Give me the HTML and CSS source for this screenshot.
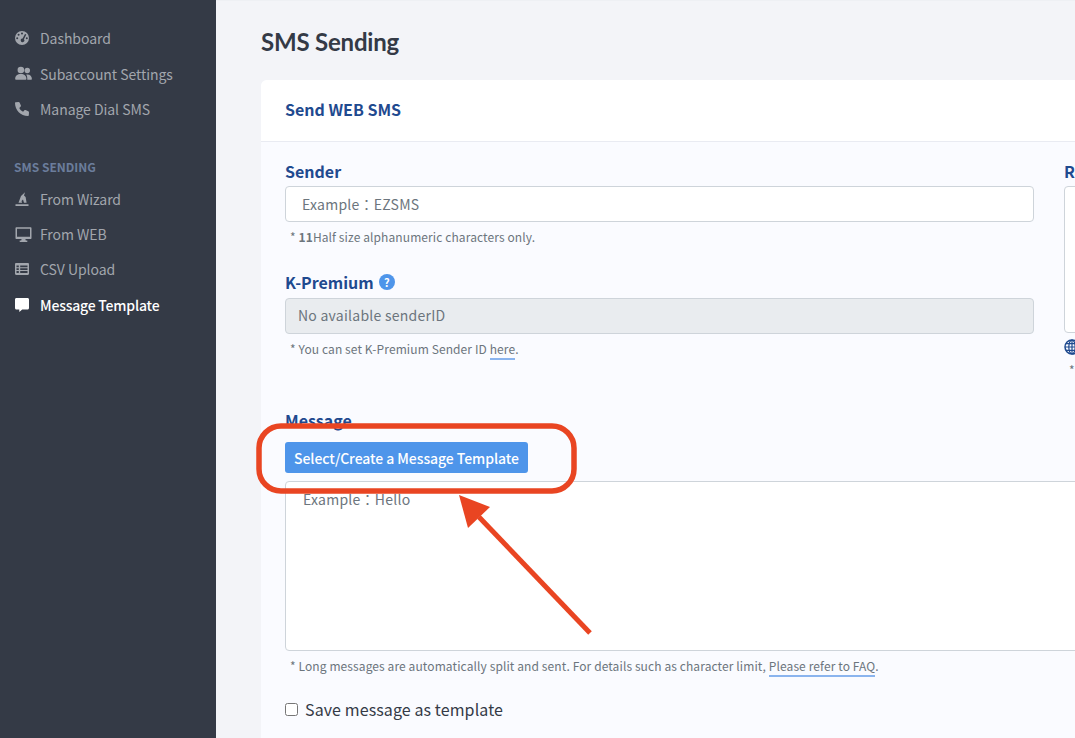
FILE: index.html
```html
<!DOCTYPE html>
<html lang="en">
<head>
<meta charset="utf-8">
<title>SMS Sending</title>
<link rel="stylesheet" href="styles.css">
</head>
<body>
<div class="app">
  <aside class="sidebar">
    <nav class="nav-group">
      <a class="nav-item"><svg class="nav-icon" viewBox="1 1 14 14"><path fill-rule="evenodd" d="M8 1a7 7 0 1 1 0 14A7 7 0 0 1 8 1ZM8 2.400a1 1 0 1 0 0 2 1 1 0 0 0 0-2ZM4.600 3.800a1 1 0 1 0 0 2 1 1 0 0 0 0-2ZM3.200 7.200a1 1 0 1 0 0 2 1 1 0 0 0 0-2ZM11 3.900 8.600 8.500a1.800 1.800 0 1 0 1.300.7l2.400-4.600ZM12.800 7.200a1 1 0 1 0 0 2 1 1 0 0 0 0-2Z"/></svg><span>Dashboard</span></a>
      <a class="nav-item"><svg class="nav-icon nav-icon-wide" viewBox="0 0 18 15"><circle cx="6.200" cy="3.800" r="3.500"/><circle cx="13" cy="4.300" r="2.900"/><path d="M0.200 13.200c0-3.400 2.400-5.200 6-5.200s5.900 1.800 5.900 5.200c0 .5-.3.800-.8.800H1c-.5 0-.8-.3-.8-.8Z"/><path d="M13 14h4.200c.4 0 .7-.3.7-.7 0-2.900-1.800-4.800-4.800-4.800-.7 0-1 .1-1.300.2 1 1 1.300 3 1.200 5.300Z"/></svg><span>Subaccount Settings</span></a>
      <a class="nav-item"><svg class="nav-icon" viewBox="1 1 14 14"><path d="M1.800 1.200 4.600 1c.5 0 .9.200 1.100.7l1.200 2.800c.2.400.1.800-.2 1.100L5.300 6.900c.8 1.700 2.100 3 3.800 3.800l1.300-1.400c.3-.3.700-.4 1.100-.2l2.800 1.200c.5.200.7.600.7 1.100l-.2 2.800c0 .5-.5.800-.9.800C6.700 15 1 9.300 1 2.100c0-.4.300-.9.800-.9Z"/></svg><span>Manage Dial SMS</span></a>
    </nav>
    <h2 class="nav-heading">SMS SENDING</h2>
    <nav class="nav-group">
      <a class="nav-item"><svg class="nav-icon" viewBox="1 1 14 14"><path fill-rule="evenodd" d="M4.500 11.800 7 5 11 1.200 10 4.500l1.600 1.500 1 5.800H10L9 8.500 7.500 10l.6 1.800ZM1.500 13.200h13V15h-13Z"/></svg><span>From Wizard</span></a>
      <a class="nav-item"><svg class="nav-icon nav-icon-wide" viewBox="0 0 16 15"><path fill-rule="evenodd" d="M1 0.300h14c.6 0 1 .4 1 1v9.700c0 .6-.4 1-1 1H9.900l.4 1.400h1.500V15H4.200v-1.600h1.500l.4-1.400H1c-.6 0-1-.4-1-1V1.300c0-.6.4-1 1-1Zm.5 1.500v7.900h13V1.800Z"/></svg><span>From WEB</span></a>
      <a class="nav-item"><svg class="nav-icon" viewBox="1 1 14 14"><path fill-rule="evenodd" d="M2.200 2h11.600c.7 0 1.200.5 1.200 1.200v9.600c0 .7-.5 1.200-1.200 1.200H2.200c-.7 0-1.200-.5-1.200-1.200V3.200C1 2.500 1.500 2 2.200 2Zm.3 2.500v1.800h2.300V4.500Zm3.700 0v1.800h7.300V4.500ZM2.500 7.300v1.600h2.300V7.300Zm3.700 0v1.600h7.300V7.300ZM2.500 10v2h2.300v-2Zm3.700 0v2h7.300v-2Z"/></svg><span>CSV Upload</span></a>
      <a class="nav-item nav-item-active"><svg class="nav-icon" viewBox="1 1 14 14"><path d="M2.500 1h11c.9 0 1.500.6 1.500 1.500v8.500c0 .9-.6 1.500-1.500 1.500H8.200L5.300 15V12.500H2.500C1.600 12.500 1 11.900 1 11V2.500C1 1.600 1.600 1 2.500 1Z"/></svg><span>Message Template</span></a>
    </nav>
  </aside>

  <main class="main">
    <h1 class="page-title">SMS Sending</h1>
    <section class="card">
      <header class="card-header">Send WEB SMS</header>
      <div class="card-body">
        <div class="columns">
          <div class="col">
            <div class="field field-sender">
              <label class="label">Sender</label>
              <div class="input">Example：EZSMS</div>
              <p class="hint">* <b>11</b>Half size alphanumeric characters only.</p>
            </div>
            <div class="field field-premium">
              <label class="label">K-Premium <span class="help">?</span></label>
              <div class="input input-disabled">No available senderID</div>
              <p class="hint">* You can set K-Premium Sender ID <a class="link">here</a>.</p>
            </div>
          </div>
          <div class="col">
            <label class="label">Recipients</label>
            <div class="recipients"></div>
            <div class="globe-row"><svg class="globe" viewBox="0 0 16 16"><circle cx="8" cy="8" r="7" fill="none" stroke="#1f4a8f" stroke-width="1.500"/><ellipse cx="8" cy="8" rx="3.200" ry="7" fill="none" stroke="#1f4a8f" stroke-width="1.200"/><path d="M1 8h14M2 4.600h12M2 11.400h12M8 1v14" stroke="#1f4a8f" stroke-width="1.200"/></svg></div>
            <p class="hint hint-right">* Numbers</p>
          </div>
        </div>

        <div class="field field-message">
          <label class="label">Message</label>
          <button class="btn" type="button">Select/Create a Message Template</button>
          <div class="textarea">Example：Hello</div>
          <p class="hint">* Long messages are automatically split and sent. For details such as character limit, <a class="link">Please refer to FAQ</a>.</p>
          <label class="check"><input type="checkbox"><span>Save message as template</span></label>
        </div>
      </div>
    </section>
  </main>

  <svg class="annotation" viewBox="0 0 1075 738">
    <rect x="259" y="426" width="315" height="65" rx="22" fill="none" stroke="#e94522" stroke-width="5.500"/>
    <path d="M590 633 479 517" fill="none" stroke="#e94522" stroke-width="5"/>
    <path d="M459 495 490 507 468 528Z" fill="#e94522"/>
  </svg>
</div>
</body>
</html>
```
FILE: styles.css
```css
* { box-sizing: border-box; }
html, body { margin: 0; height: 100%; overflow: hidden; }
body {
  font-family: "Noto Sans CJK JP", "Noto Sans", sans-serif;
  color: #6c757d;
  background: #f3f4f8;
}
.app { display: flex; height: 738px; width: 1075px; position: relative; overflow: hidden; }

.sidebar {
  flex: 0 0 216px;
  background: #343a46;
  padding-top: 20.8px;
}
.nav-group { display: flex; flex-direction: column; }
.nav-item {
  display: flex;
  align-items: center;
  height: 35.4px;
  padding-left: 15px;
  font-size: 14px;
  letter-spacing: -0.05px;
  color: #a2a6ad;
}
.nav-item span { margin-left: 11px; }
.nav-icon { width: 14px; height: 14px; fill: #a2a6ad; flex: none; }
.nav-icon-wide { width: 17px; height: 15px; margin-right: -3px; }
.nav-item-active { color: #fff; font-weight: 500; letter-spacing: -0.2px; }
.nav-item-active .nav-icon { fill: #fff; }
.nav-heading {
  margin: 32px 0 7px 14px;
  height: 15px;
  line-height: 15px;
  font-size: 12px;
  font-weight: 700;
  color: #6b7d9c;
}

.main {
  flex: 1;
  min-width: 0;
  padding: 0 0 0 45px;
  border-top: 1px solid #eef0f4;
}
.page-title {
  margin: 23px 0 0;
  height: 35px;
  line-height: 35px;
  font-family: Lato, sans-serif;
  font-size: 24px;
  font-weight: 700;
  letter-spacing: -0.2px;
  color: #343a46;
}
.card {
  margin-top: 21px;
  width: 1100px;
  background: #fafbff;
  border-radius: 6px 0 0 0;
}
.card-header {
  height: 62px;
  line-height: 58px;
  padding-left: 24px;
  background: #fff;
  border-bottom: 1px solid #e9ebf2;
  border-radius: 6px 0 0 0;
  font-size: 16px;
  font-weight: 700;
  color: #1f4a8f;
}
.card-body { padding: 19px 24px 40px; }
.columns { display: grid; grid-template-columns: 749px 300px; column-gap: 30px; height: 232px; }
.label {
  display: flex;
  align-items: center;
  height: 22px;
  padding-bottom: 2px;
  font-size: 16px;
  font-weight: 700;
  color: #1f4a8f;
}
.help {
  display: inline-flex;
  align-items: center;
  justify-content: center;
  width: 16px;
  height: 16px;
  margin-left: 5px;
  border-radius: 50%;
  background: #4e95ea;
  color: #fff;
  font-size: 11px;
  font-weight: 700;
}
.input {
  height: 36px;
  line-height: 34px;
  margin-top: 3px;
  padding-left: 16px;
  background: #fff;
  border: 1px solid #ced4da;
  border-radius: 4px;
  font-size: 14px;
  letter-spacing: 0.25px;
  color: #6c757d;
}
.input-disabled { padding-left: 12px; background: #e9ecef; line-height: 32px; }
.hint {
  margin: 6px 0 0 5px;
  height: 17px;
  line-height: 17px;
  font-size: 12px;
  letter-spacing: 0.1px;
  color: #6c757d;
}
.hint b { font-weight: 700; }
.link { color: #6c757d; border-bottom: 2px solid #8ab4ee; padding-bottom: 1px; }
.field-premium { margin-top: 28px; }
.field-premium .label { padding-bottom: 4px; }
.recipients {
  height: 147px;
  margin-top: 3px;
  background: #fff;
  border: 1px solid #ced4da;
  border-radius: 4px;
}
.globe-row { height: 16px; margin-top: 6px; }
.globe { display: block; width: 16px; height: 16px; }
.hint-right { margin: 6px 0 0 5px; }

.field-message { margin-top: 17px; }
.field-message .label { height: 20px; padding-bottom: 0; }
.btn {
  display: block;
  height: 31px;
  margin-top: 12px;
  padding: 0 9px;
  border: 0;
  border-radius: 3px;
  background: #4e95ea;
  color: #fff;
  font-family: "Noto Sans CJK JP", "Noto Sans", sans-serif;
  font-size: 14px;
  font-weight: 500;
  letter-spacing: -0.06px;
}
.textarea {
  width: 1000px;
  height: 170px;
  margin-top: 8px;
  padding: 7px 17px;
  line-height: 21px;
  background: #fff;
  border: 1px solid #ced4da;
  border-radius: 4px;
  font-size: 14px;
  letter-spacing: 0.25px;
  color: #6c757d;
}
.check {
  display: flex;
  align-items: center;
  margin-top: 24px;
  height: 22px;
  font-size: 16px;
  letter-spacing: 0.1px;
  color: #343a46;
}
.check input { width: 13px; height: 13px; margin: 0 7px 0 0; }

.annotation {
  position: absolute;
  left: 0;
  top: 0;
  width: 1075px;
  height: 738px;
  pointer-events: none;
}
```
